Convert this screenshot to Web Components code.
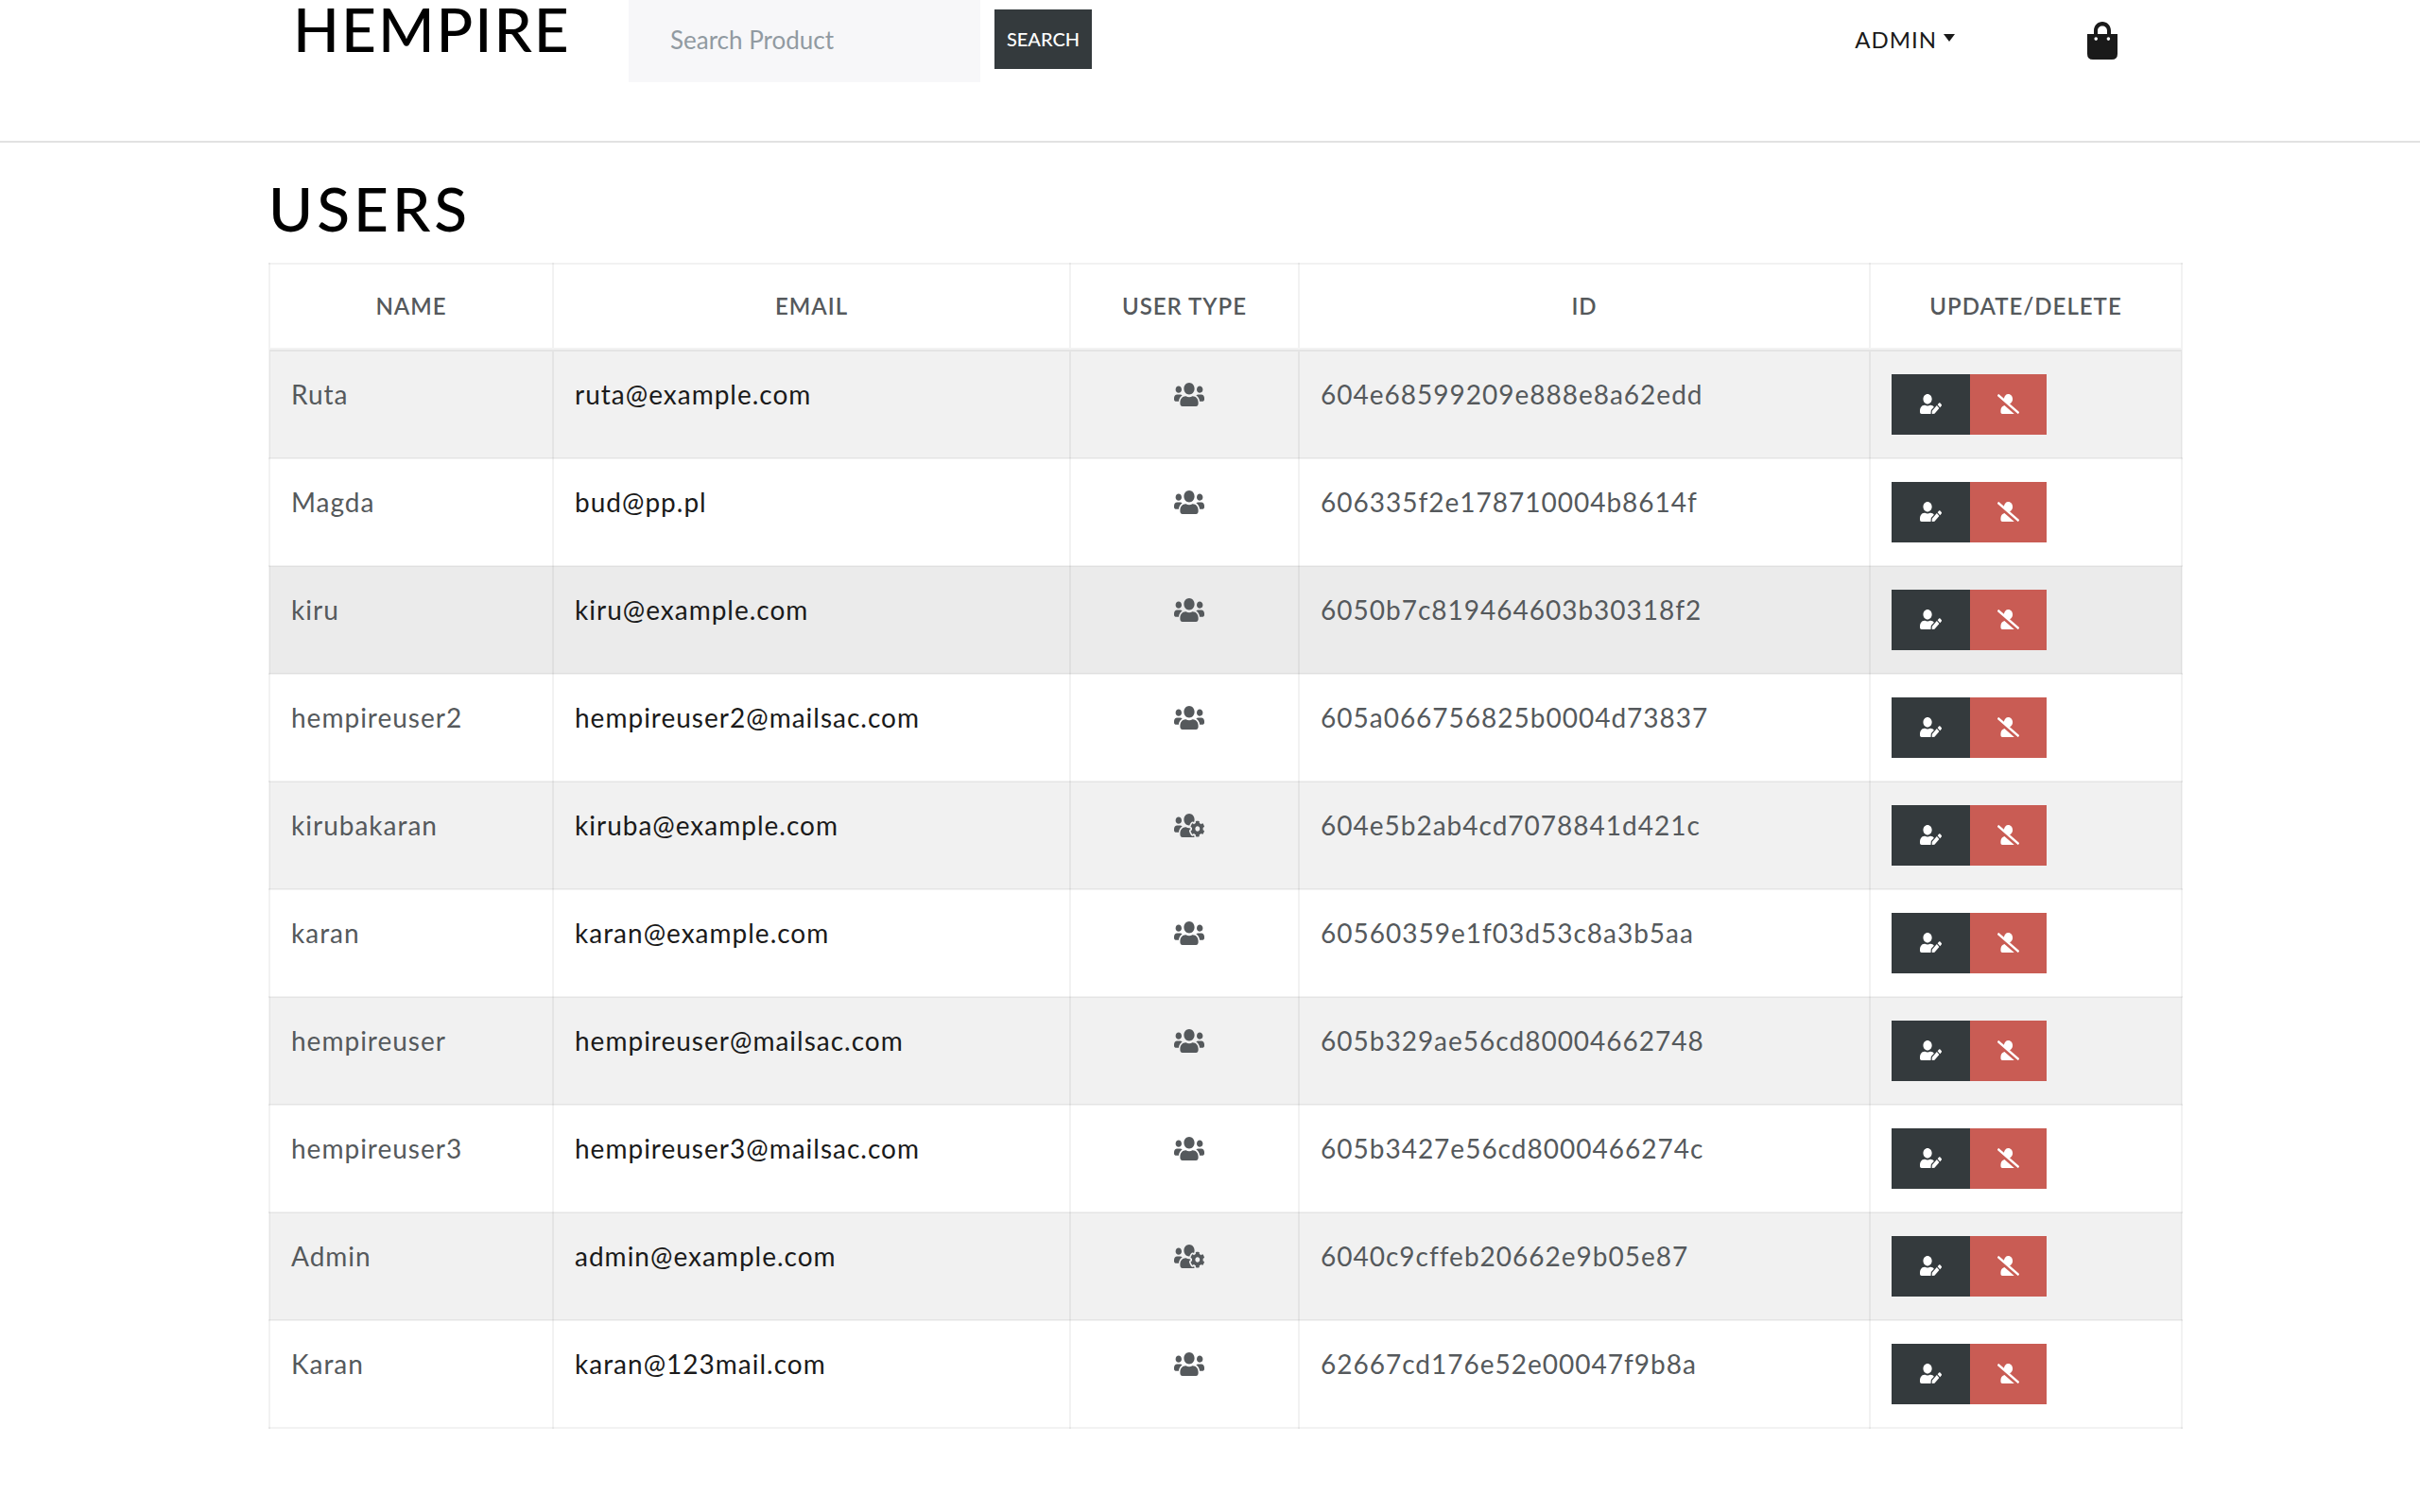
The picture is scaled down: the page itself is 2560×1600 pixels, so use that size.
<!DOCTYPE html>
<html lang="en">
<head>
<meta charset="utf-8">
<title>Hempire – Users</title>
<style>
  body { margin: 0; background: #fff; color: #55595c; font-family: Lato, "Open Sans", sans-serif; font-size: 28px; line-height: 42px; }
</style>
</head>
<body>
<admin-page>
  <site-header slot="header"></site-header>
  <page-title>USERS</page-title>
  <users-table></users-table>
</admin-page>
<script>
const ICONS = {
  users: ['0 32 640 448', 'M96 224c35.3 0 64-28.7 64-64s-28.7-64-64-64-64 28.7-64 64 28.7 64 64 64zm448 0c35.3 0 64-28.7 64-64s-28.7-64-64-64-64 28.7-64 64 28.7 64 64 64zm32 32h-64c-17.6 0-33.5 7.1-45.1 18.6 40.3 22.1 68.9 62 75.1 109.4h66c17.7 0 32-14.3 32-32v-32c0-35.3-28.7-64-64-64zm-256 0c61.9 0 112-50.1 112-112S381.9 32 320 32 208 82.1 208 144s50.1 112 112 112zm76.8 32h-8.3c-20.8 10-43.9 16-68.5 16s-47.6-6-68.5-16h-8.3C179.6 288 128 339.6 128 403.2V432c0 26.5 21.5 48 48 48h288c26.5 0 48-21.5 48-48v-28.8c0-63.6-51.6-115.2-115.2-115.2zm-223.7-13.4C161.5 263.1 145.6 256 128 256H64c-35.3 0-64 28.7-64 64v32c0 17.7 14.3 32 32 32h65.9c6.3-47.4 34.9-87.3 75.2-109.4z'],
  'users-cog': ['0 32 640 448', 'M610.5 341.3c2.6-14.1 2.6-28.5 0-42.6l25.8-14.9c3-1.7 4.3-5.2 3.3-8.5-6.7-21.6-18.2-41.2-33.2-57.4-2.3-2.5-6-3.1-9-1.4l-25.8 14.9c-10.9-9.3-23.4-16.5-36.9-21.3v-29.8c0-3.4-2.4-6.4-5.7-7.1-22.3-5-45-4.8-66.2 0-3.3.7-5.7 3.7-5.7 7.1v29.8c-13.5 4.8-26 12-36.9 21.3l-25.8-14.9c-2.9-1.7-6.7-1.1-9 1.4-15 16.2-26.5 35.8-33.2 57.4-1 3.3.4 6.8 3.3 8.5l25.8 14.9c-2.6 14.1-2.6 28.5 0 42.6l-25.8 14.9c-3 1.7-4.3 5.2-3.3 8.5 6.7 21.6 18.2 41.1 33.2 57.4 2.3 2.5 6 3.1 9 1.4l25.8-14.9c10.9 9.3 23.4 16.5 36.9 21.3v29.8c0 3.4 2.4 6.4 5.7 7.1 22.3 5 45 4.8 66.2 0 3.3-.7 5.7-3.7 5.7-7.1v-29.8c13.5-4.8 26-12 36.9-21.3l25.8 14.9c2.9 1.7 6.7 1.1 9-1.4 15-16.2 26.5-35.8 33.2-57.4 1-3.3-.4-6.8-3.3-8.5l-25.8-14.9zM496 368.5c-26.8 0-48.5-21.8-48.5-48.5s21.8-48.5 48.5-48.5 48.5 21.8 48.5 48.5-21.7 48.5-48.5 48.5zM96 224c35.3 0 64-28.7 64-64s-28.7-64-64-64-64 28.7-64 64 28.7 64 64 64zm224 32c1.9 0 3.7-.5 5.6-.6 8.3-21.7 20.5-42.1 36.3-59.2 7.4-8 17.9-12.6 28.9-12.6 6.9 0 13.7 1.8 19.6 5.3l7.9 4.6c.8-.5 1.6-.9 2.4-1.4 7-14.6 11.2-30.8 11.2-48 0-61.9-50.1-112-112-112S208 82.1 208 144c0 61.9 50.1 112 112 112zm105.2 194.5c-2.3-1.2-4.6-2.6-6.8-3.9-8.2 4.8-15.3 9.8-27.5 9.8-10.9 0-21.4-4.6-28.9-12.6-18.3-19.8-32.3-43.9-40.2-69.6-10.7-34.5 24.9-49.7 25.8-50.3-.1-2.6-.1-5.2 0-7.8l-7.9-4.6c-3.8-2.2-7-5-9.8-8.1-3.3.2-6.5.6-9.8.6-24.6 0-47.6-6-68.5-16h-8.3C179.6 288 128 339.6 128 403.2V432c0 26.5 21.5 48 48 48h255.4c-3.7-6-6.2-12.8-6.2-20.3v-9.2zM173.1 274.6C161.5 263.1 145.6 256 128 256H64c-35.3 0-64 28.7-64 64v32c0 17.7 14.3 32 32 32h65.9c6.3-47.4 34.9-87.3 75.2-109.4z'],
  'user-slash': ['0 0 640 512', 'M633.8 458.1L362.3 248.3C412.1 230.7 448 183.8 448 128 448 57.3 390.7 0 320 0c-67.1 0-121.5 51.8-126.9 117.4L45.5 3.4C38.5-2 28.5-.8 23 6.2L3.4 31.4c-5.4 7-4.2 17 2.8 22.4l588.4 454.7c7 5.4 17 4.2 22.5-2.8l19.6-25.3c5.4-6.8 4.1-16.9-2.9-22.3zM96 422.4V464c0 26.5 21.5 48 48 48h350.2L207.4 290.3C144.2 301.3 96 356 96 422.4z'],
  'user-edit': ['0 0 640 512', 'M224 256c70.7 0 128-57.3 128-128S294.7 0 224 0 96 57.3 96 128s57.3 128 128 128zm89.6 32h-16.7c-22.2 10.2-46.9 16-72.9 16s-50.6-5.8-72.9-16h-16.7C60.2 288 0 348.2 0 422.4V464c0 26.5 21.5 48 48 48h274.9c-2.4-6.8-3.4-14-2.6-21.3l6.8-60.9 1.2-11.1 7.9-7.9 77.3-77.3c-24.5-27.7-60-45.5-99.9-45.5zm45.3 145.3l-6.8 61c-1.1 10.2 7.5 18.8 17.6 17.6l60.9-6.8 137.9-137.9-71.7-71.7-137.9 137.8zM633 268.9L595.1 231c-9.3-9.3-24.5-9.3-33.8 0l-37.8 37.8-4.1 4.1 71.8 71.7 41.8-41.8c9.3-9.4 9.3-24.5 0-33.9z'],
  bag: ['0 0 32 40', 'M0 13H7V9.5C7 4 11 0 16 0s9 4 9 9.5V13h7V34q0 6-6 6H6q-6 0-6-6ZM11 13H21V9.5C21 6.500 18.800 4.500 16 4.500S11 6.500 11 9.500ZM9.200 16.300a1.800 1.800 0 1 0 .01 3.600a1.800 1.800 0 1 0-.01-3.600ZM22.400 16.300a1.800 1.800 0 1 0 .01 3.600a1.800 1.800 0 1 0-.01-3.600Z'],
  caret: ['0 0 12 8', 'M0 0H12L6 8Z']
};

class BaseElement extends HTMLElement {
  constructor() {
    super();
    this.attachShadow({ mode: 'open' });
  }
  connectedCallback() {
    this.shadowRoot.innerHTML = this.render();
  }
}

customElements.define('app-icon', class extends BaseElement {
  render() {
    const [box, path] = ICONS[this.getAttribute('name')];
    return `<style>
      :host { display: inline-block; flex: none; }
      svg { display: block; width: 100%; height: 100%; fill: currentColor; }
    </style>
    <svg viewBox="${box}" preserveAspectRatio="none" aria-hidden="true"><path fill-rule="evenodd" d="${path}"/></svg>`;
  }
});

customElements.define('admin-page', class extends BaseElement {
  render() {
    return `<style>
      :host { display: block; }
      main { padding: 26px 251px 80px 284px; }
    </style>
    <slot name="header"></slot>
    <main><slot></slot></main>`;
  }
});

customElements.define('product-search', class extends BaseElement {
  render() {
    return `<style>
      :host { display: block; }
      form { display: flex; align-items: flex-start; gap: 15px; }
      input { box-sizing: border-box; width: 372px; height: 87px; padding: 0 44px 4px; border: 0; background: #f7f7f9; font: inherit; font-size: 26px; color: #55595c; }
      input::placeholder { color: #919aa1; opacity: 1; }
      button { width: 103px; height: 63px; margin: 10px 0 0; padding: 0 0 2px; border: 0; background: #343a3d; color: #fff; font: inherit; font-size: 20px; font-weight: 500; }
    </style>
    <form>
      <input type="text" placeholder="Search Product" aria-label="Search Product">
      <button type="button">SEARCH</button>
    </form>`;
  }
});

customElements.define('site-header', class extends BaseElement {
  render() {
    return `<style>
      :host { display: block; border-bottom: 2px solid #e2e2e2; }
      nav { display: flex; align-items: flex-start; height: 149px; padding: 0 320px 0 310px; }
      a { color: #1a1a1a; text-decoration: none; }
      .brand { width: 355px; color: #000; font-size: 64px; line-height: 62px; font-weight: 500; letter-spacing: 2px; }
      .links { display: flex; align-items: center; gap: 140px; height: 86px; margin-left: auto; }
      .menu { display: flex; align-items: center; gap: 7px; padding-bottom: 2px; font-size: 24px; font-weight: 400; letter-spacing: 1px; }
      .menu app-icon { width: 12px; height: 8px; padding-bottom: 4px; }
      .cart app-icon { display: block; width: 32px; height: 40px; }
    </style>
    <nav>
      <a class="brand" href="#">HEMPIRE</a>
      <product-search></product-search>
      <div class="links">
        <a class="menu" href="#">ADMIN<app-icon name="caret"></app-icon></a>
        <a class="cart" href="#" aria-label="Cart"><app-icon name="bag"></app-icon></a>
      </div>
    </nav>`;
  }
});

customElements.define('page-title', class extends BaseElement {
  render() {
    return `<style>
      :host { display: block; }
      h1 { margin: 0 0 14px; color: #000; font-size: 64px; line-height: 87px; font-weight: 500; letter-spacing: 4px; }
    </style>
    <h1><slot></slot></h1>`;
  }
});

customElements.define('user-actions', class extends BaseElement {
  render() {
    return `<style>
      :host { display: flex; }
      button { display: flex; align-items: center; justify-content: center; width: 83px; height: 64px; padding: 0 0 2px; border: 0; background: #343a3d; color: #fff; }
      .delete { width: 81px; background: #c95c54; }
      app-icon { width: 23px; height: 21px; }
    </style>
    <button type="button" aria-label="Update user"><app-icon name="user-edit"></app-icon></button>
    <button type="button" class="delete" aria-label="Delete user"><app-icon name="user-slash"></app-icon></button>`;
  }
});

customElements.define('users-table', class extends BaseElement {
  static users = [
    ['Ruta', 'ruta@example.com', 'users', '604e68599209e888e8a62edd'],
    ['Magda', 'bud@pp.pl', 'users', '606335f2e178710004b8614f'],
    ['kiru', 'kiru@example.com', 'users', '6050b7c819464603b30318f2'],
    ['hempireuser2', 'hempireuser2@mailsac.com', 'users', '605a066756825b0004d73837'],
    ['kirubakaran', 'kiruba@example.com', 'users-cog', '604e5b2ab4cd7078841d421c'],
    ['karan', 'karan@example.com', 'users', '60560359e1f03d53c8a3b5aa'],
    ['hempireuser', 'hempireuser@mailsac.com', 'users', '605b329ae56cd80004662748'],
    ['hempireuser3', 'hempireuser3@mailsac.com', 'users', '605b3427e56cd8000466274c'],
    ['Admin', 'admin@example.com', 'users-cog', '6040c9cffeb20662e9b05e87'],
    ['Karan', 'karan@123mail.com', 'users', '62667cd176e52e00047f9b8a']
  ];
  render() {
    const rows = this.constructor.users.map(([name, email, type, id], i) => `
      <tr${i === 2 ? ' class="active"' : ''}>
        <td>${name}</td>
        <td><a href="mailto:${email}">${email}</a></td>
        <td class="type"><app-icon name="${type}"></app-icon></td>
        <td>${id}</td>
        <td><user-actions></user-actions></td>
      </tr>`).join('');
    return `<style>
      :host { display: block; }
      table { width: 100%; table-layout: fixed; border-collapse: collapse; letter-spacing: 1px; }
      .name { width: 300px; } .kind { width: 242px; } .id { width: 604px; } .actions { width: 330px; }
      th, td { padding: 24px 22px; border: 2px solid rgba(0, 0, 0, .05); text-align: left; vertical-align: top; }
      th { padding-block: 23px; border-bottom-width: 4px; font-size: 24px; font-weight: 600; text-align: center; }
      tbody tr:nth-child(odd) { background: #f1f1f1; }
      tbody tr.active { background: #ebebeb; }
      a { color: #1a1a1a; text-decoration: none; }
      .type { padding-left: 32px; text-align: center; }
      .type app-icon { width: 32px; height: 25px; vertical-align: -2px; }
    </style>
    <table>
      <colgroup><col class="name"><col><col class="kind"><col class="id"><col class="actions"></colgroup>
      <thead><tr><th>NAME</th><th>EMAIL</th><th>USER TYPE</th><th>ID</th><th>UPDATE/DELETE</th></tr></thead>
      <tbody>${rows}</tbody>
    </table>`;
  }
});
</script>
</body>
</html>
